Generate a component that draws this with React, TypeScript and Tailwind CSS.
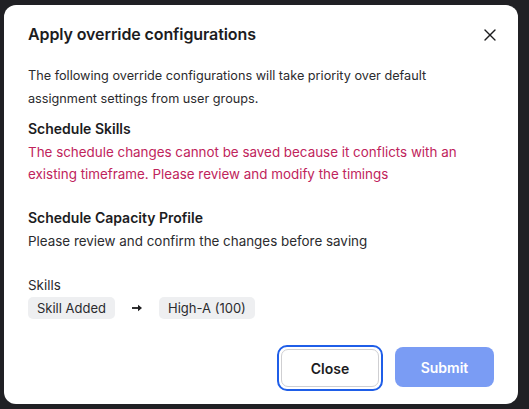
import { X } from 'lucide-react';

export default function App() {
  return (
    <div className="h-[409px] w-[529px] bg-[#202024] pl-[4px] pt-[5px] font-['Inter',sans-serif] text-[#1c1c1e]">
      <div className="flex h-[399px] w-[514px] flex-col rounded-[12px] bg-white pl-[24px] pr-[24px] pt-[16px]">
        <div className="flex items-center justify-between">
          <h2 className="text-[16px] font-semibold leading-[26px] tracking-[-0.1px]">Apply override configurations</h2>
          <button type="button" className="mr-[-6px] mt-[2px] text-[#1c1c1e]">
            <X size={20} strokeWidth={1.6} />
          </button>
        </div>

        <p className="mt-[17px] text-[12.7px] leading-[23px] text-[#2b2b2e]">
          The following override configurations will take priority over default assignment settings from user groups.
        </p>

        <h3 className="mt-[8px] text-[14px] font-semibold leading-[22px]">Schedule Skills</h3>
        <p className="mt-[1px] text-[13.4px] leading-[22px] text-[#c0245c]">
          The schedule changes cannot be saved because it conflicts with an existing timeframe. Please review and modify the timings
        </p>

        <h3 className="mt-[22px] text-[14px] font-semibold leading-[22px]">Schedule Capacity Profile</h3>
        <p className="mt-[1px] text-[13.4px] leading-[22px] text-[#2b2b2e]">Please review and confirm the changes before saving</p>

        <p className="mt-[22px] text-[13.4px] leading-[22px] text-[#2b2b2e]">Skills</p>
        <div className="mt-[1px] flex items-center">
          <span className="rounded-[5px] bg-[#eeeff1] px-[9px] text-[13px] leading-[22px] text-[#2b2b2e]">Skill Added</span>
          <svg width="12" height="10" viewBox="0 0 12 10" className="mx-[16px]">
            <path d="M1 5h7" stroke="#1c1c1e" strokeWidth="1.8" />
            <path d="M7 1.8l4 3.2-4 3.2z" fill="#1c1c1e" />
          </svg>
          <span className="rounded-[5px] bg-[#eeeff1] px-[9px] text-[13px] leading-[22px] text-[#2b2b2e]">High-A (100)</span>
        </div>

        <div className="mt-[26px] flex justify-end gap-[12px]">
          <button
            type="button"
            className="h-[46px] w-[106px] rounded-[10px] border-[2px] border-[#1f5ee8] p-[2px]"
          >
            <span className="flex h-full w-full items-center justify-center rounded-[7px] border border-[#cfcfd2] text-[14px] font-semibold">
              Close
            </span>
          </button>
          <button
            type="button"
            className="mt-[2px] h-[40px] w-[99px] rounded-[8px] bg-[#7a9cf4] text-[14px] font-semibold text-white"
          >
            Submit
          </button>
        </div>
      </div>
    </div>
  );
}
